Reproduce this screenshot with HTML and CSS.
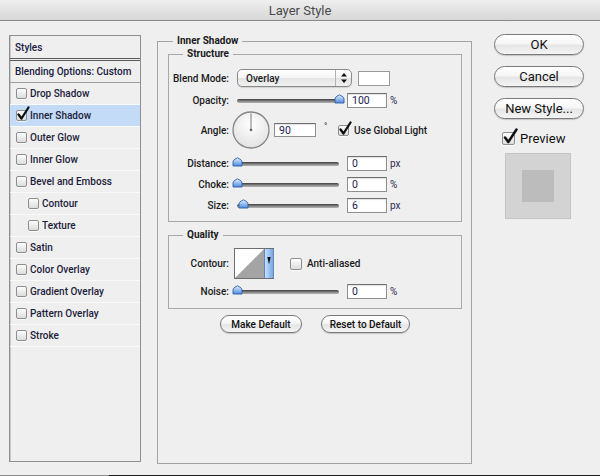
FILE: index.html
```html
<!DOCTYPE html>
<html>
<head>
<meta charset="utf-8">
<title>Layer Style</title>
<link rel="stylesheet" href="styles.css">
</head>
<body>
<div class="window">
  <div class="titlebar">Layer Style</div>
  <div class="content">
    <div class="styles-panel">
      <div class="sp-header">Styles</div>
      <div class="sp-blend">Blending Options: Custom</div>
      <div class="sp-row"><span class="cb"></span>Drop Shadow</div>
      <div class="sp-row selected"><span class="cb"><svg class="tick" width="14" height="15" viewBox="0 0 14 15"><path d="M2.5 8.5 L5.5 12.5 L12.5 1.5" fill="none" stroke="#111" stroke-width="2.3" stroke-linecap="round" stroke-linejoin="round"/></svg></span>Inner Shadow</div>
      <div class="sp-row"><span class="cb"></span>Outer Glow</div>
      <div class="sp-row"><span class="cb"></span>Inner Glow</div>
      <div class="sp-row"><span class="cb"></span>Bevel and Emboss</div>
      <div class="sp-row indent"><span class="cb"></span>Contour</div>
      <div class="sp-row indent"><span class="cb"></span>Texture</div>
      <div class="sp-row"><span class="cb"></span>Satin</div>
      <div class="sp-row"><span class="cb"></span>Color Overlay</div>
      <div class="sp-row"><span class="cb"></span>Gradient Overlay</div>
      <div class="sp-row"><span class="cb"></span>Pattern Overlay</div>
      <div class="sp-row"><span class="cb"></span>Stroke</div>
    </div>

    <div class="main-panel">
      <div class="group-title main-title">Inner Shadow</div>

      <div class="group structure">
        <div class="group-title">Structure</div>

        <div class="frow">
          <span class="lbl">Blend Mode:</span>
          <div class="select">
            <span class="select-text">Overlay</span>
            <span class="select-arrows"><svg width="8" height="12" viewBox="0 0 8 12"><path d="M4 1 L7 4.5 H1 Z" fill="#111"/><path d="M4 11 L7 7.5 H1 Z" fill="#111"/></svg></span>
          </div>
          <div class="swatch"></div>
        </div>

        <div class="frow gap4">
          <span class="lbl">Opacity:</span>
          <div class="slider"><div class="track"></div><svg class="thumb" style="left:99px" width="11" height="10" viewBox="0 0 11 10"><defs><linearGradient id="tg1" x1="0" y1="0" x2="0" y2="1"><stop offset="0" stop-color="#e6f0ff"/><stop offset="1" stop-color="#4b8be0"/></linearGradient></defs><path d="M1 9 V5 Q1 3.2 3 2.2 L5.5 0.8 L8 2.2 Q10 3.2 10 5 V9 Z" fill="url(#tg1)" stroke="#2f5fa6" stroke-width="0.9" stroke-linejoin="round"/></svg></div>
          <div class="num">100</div>
          <span class="unit">%</span>
        </div>

        <div class="frow angle-row">
          <span class="lbl">Angle:</span>
          <svg class="dial" width="38" height="38" viewBox="0 0 38 38"><defs><radialGradient id="dg" cx="0.5" cy="0.35" r="0.65"><stop offset="0" stop-color="#ffffff"/><stop offset="1" stop-color="#e2e2e2"/></radialGradient></defs><circle cx="19" cy="19" r="18" fill="url(#dg)" stroke="#858585" stroke-width="1.3"/><line x1="19" y1="19" x2="19" y2="2.5" stroke="#7a7a7a" stroke-width="1"/><circle cx="19" cy="19" r="1.3" fill="#666"/></svg>
          <div class="num angle-num">90</div>
          <span class="deg">°</span>
          <span class="cb"><svg class="tick" width="14" height="15" viewBox="0 0 14 15"><path d="M2.5 8.5 L5.5 12.5 L12.5 1.5" fill="none" stroke="#111" stroke-width="2.3" stroke-linecap="round" stroke-linejoin="round"/></svg></span>
          <span class="cb-label">Use Global Light</span>
        </div>

        <div class="frow gap5">
          <span class="lbl">Distance:</span>
          <div class="slider"><div class="track"></div><svg class="thumb" style="left:-3px" width="11" height="10" viewBox="0 0 11 10"><defs><linearGradient id="tg2" x1="0" y1="0" x2="0" y2="1"><stop offset="0" stop-color="#e6f0ff"/><stop offset="1" stop-color="#4b8be0"/></linearGradient></defs><path d="M1 9 V5 Q1 3.2 3 2.2 L5.5 0.8 L8 2.2 Q10 3.2 10 5 V9 Z" fill="url(#tg2)" stroke="#2f5fa6" stroke-width="0.9" stroke-linejoin="round"/></svg></div>
          <div class="num">0</div>
          <span class="unit">px</span>
        </div>

        <div class="frow gap3">
          <span class="lbl">Choke:</span>
          <div class="slider"><div class="track"></div><svg class="thumb" style="left:-3px" width="11" height="10" viewBox="0 0 11 10"><defs><linearGradient id="tg3" x1="0" y1="0" x2="0" y2="1"><stop offset="0" stop-color="#e6f0ff"/><stop offset="1" stop-color="#4b8be0"/></linearGradient></defs><path d="M1 9 V5 Q1 3.2 3 2.2 L5.5 0.8 L8 2.2 Q10 3.2 10 5 V9 Z" fill="url(#tg3)" stroke="#2f5fa6" stroke-width="0.9" stroke-linejoin="round"/></svg></div>
          <div class="num">0</div>
          <span class="unit">%</span>
        </div>

        <div class="frow gap3">
          <span class="lbl">Size:</span>
          <div class="slider"><div class="track"></div><svg class="thumb" style="left:3px" width="11" height="10" viewBox="0 0 11 10"><defs><linearGradient id="tg4" x1="0" y1="0" x2="0" y2="1"><stop offset="0" stop-color="#e6f0ff"/><stop offset="1" stop-color="#4b8be0"/></linearGradient></defs><path d="M1 9 V5 Q1 3.2 3 2.2 L5.5 0.8 L8 2.2 Q10 3.2 10 5 V9 Z" fill="url(#tg4)" stroke="#2f5fa6" stroke-width="0.9" stroke-linejoin="round"/></svg></div>
          <div class="num">6</div>
          <span class="unit">px</span>
        </div>
      </div>

      <div class="group quality">
        <div class="group-title">Quality</div>
        <div class="frow contour-row">
          <span class="lbl">Contour:</span>
          <svg class="contour" width="40" height="31" viewBox="0 0 40 31"><defs><linearGradient id="cg" x1="0" y1="0" x2="1" y2="0"><stop offset="0" stop-color="#d4e6fc"/><stop offset="1" stop-color="#6ea4e8"/></linearGradient></defs><rect x="0.5" y="0.5" width="39" height="30" fill="#ffffff" stroke="#6e6e6e"/><polygon points="1,30 30,1 30,30" fill="#a4a4a4"/><rect x="30" y="1" width="9.5" height="29" fill="url(#cg)"/><line x1="30.5" y1="1" x2="30.5" y2="30" stroke="#5c86c2"/><path d="M33.3 9 H36.7 L35 16.5 Z" fill="#111"/></svg>
          <span class="cb aa"></span>
          <span class="cb-label">Anti-aliased</span>
        </div>
        <div class="frow gap3">
          <span class="lbl">Noise:</span>
          <div class="slider"><div class="track"></div><svg class="thumb" style="left:-3px" width="11" height="10" viewBox="0 0 11 10"><defs><linearGradient id="tg5" x1="0" y1="0" x2="0" y2="1"><stop offset="0" stop-color="#e6f0ff"/><stop offset="1" stop-color="#4b8be0"/></linearGradient></defs><path d="M1 9 V5 Q1 3.2 3 2.2 L5.5 0.8 L8 2.2 Q10 3.2 10 5 V9 Z" fill="url(#tg5)" stroke="#2f5fa6" stroke-width="0.9" stroke-linejoin="round"/></svg></div>
          <div class="num">0</div>
          <span class="unit">%</span>
        </div>
      </div>

      <div class="btn-row">
        <button class="pill small make">Make Default</button>
        <button class="pill small reset">Reset to Default</button>
      </div>
    </div>

    <div class="actions">
      <button class="pill big">OK</button>
      <button class="pill big">Cancel</button>
      <button class="pill big">New Style...</button>
      <div class="preview-check">
        <span class="cb big-cb"><svg class="tick big-tick" width="16" height="17" viewBox="0 0 16 17"><path d="M3 9.5 L6.3 14 L14.5 1.5" fill="none" stroke="#111" stroke-width="2.5" stroke-linecap="round" stroke-linejoin="round"/></svg></span>
        <span class="preview-label">Preview</span>
      </div>
      <div class="preview-box"><div class="preview-inner"></div></div>
    </div>
  </div>
  <div class="bottom-edge"><span class="be-left"></span><span class="be-right"></span></div>
</div>
</body>
</html>
```

FILE: styles.css
```css
* { box-sizing: border-box; }

html, body {
  margin: 0;
  padding: 0;
  background: #efefef;
}

body {
  font-family: Roboto, "Liberation Sans", sans-serif;
  font-size: 10px;
  color: #1b1b1b;
}

.window {
  width: 600px;
  height: 476px;
  display: flex;
  flex-direction: column;
  overflow: hidden;
}

.titlebar {
  height: 21px;
  line-height: 21px;
  text-align: center;
  font-size: 13px;
  color: #4a4a4a;
  background: linear-gradient(#efefef, #d6d6d6);
  border-bottom: 1px solid #8a8a8a;
  flex: none;
}

.content {
  flex: 1;
  display: flex;
  align-items: flex-start;
  padding: 13px 0 0 9px;
}

/* ---------- Styles list ---------- */
.styles-panel {
  width: 132px;
  height: 427px;
  margin-top: 1px;
  border: 1px solid #8f8f8f;
  box-shadow: inset 1px 0 0 #c9c9c9;
  background: #efefef;
  font-weight: 500;
  flex: none;
}

.sp-header {
  height: 25px;
  padding: 6px 0 0 5px;
  border-bottom: 3px double #5a5a5a;
  color: #202040;
}

.sp-blend {
  height: 22px;
  line-height: 21px;
  padding-left: 5px;
  border-bottom: 1px solid #9c9c9c;
  color: #202040;
}

.sp-row {
  height: 22px;
  display: flex;
  align-items: center;
  padding-left: 6px;
  border-bottom: 1px solid #fafafa;
  color: #1d1d3c;
}

.sp-row.selected {
  background: #c4dbf8;
}

.sp-row.indent {
  padding-left: 18px;
}

.sp-row .cb {
  margin-right: 3px;
}

/* ---------- checkbox ---------- */
.cb {
  display: inline-block;
  position: relative;
  width: 11px;
  height: 11px;
  border: 1px solid #8e8e8e;
  border-radius: 2px;
  background: linear-gradient(#fdfdfd, #dcdcdc);
  box-shadow: 0 1px 0 rgba(255,255,255,0.7);
  flex: none;
}

.tick {
  position: absolute;
  left: -1px;
  top: -5px;
}

/* ---------- main panel ---------- */
.main-panel {
  position: relative;
  width: 315px;
  height: 423px;
  margin: 7px 0 0 16px;
  border: 1px solid #a3a3a3;
  padding: 12px 9px 0 10px;
  flex: none;
}

.group-title {
  position: absolute;
  top: -7px;
  left: 14px;
  padding: 0 4px;
  line-height: 12px;
  background: #efefef;
  font-weight: 700;
  color: #1b1b1b;
}

.main-title {
  left: 15px;
}

.group {
  position: relative;
  border: 1px solid #a8a8a8;
}

.structure {
  height: 168px;
  padding: 14px 0 7px 0;
}

.quality {
  height: 74px;
  margin-top: 13px;
  padding: 12px 0 0 0;
}

.frow {
  display: flex;
  align-items: center;
  height: 18px;
}

.gap4 { margin-top: 4px; }
.gap5 { margin-top: 5px; }
.gap3 { margin-top: 3px; }

.lbl {
  width: 60px;
  text-align: right;
  margin-right: 6px;
  font-weight: 500;
  flex: none;
}

.select {
  width: 115px;
  height: 18px;
  margin-left: 2px;
  border: 1px solid #8a8a8a;
  border-radius: 5px;
  background: linear-gradient(#ffffff, #f4f4f4 50%, #e4e4e4 51%, #f1f1f1);
  display: flex;
  align-items: center;
  justify-content: space-between;
  box-shadow: 0 1px 1px rgba(0,0,0,0.12);
  flex: none;
}

.select-text {
  padding-left: 8px;
  font-weight: 500;
}

.select-arrows {
  width: 16px;
  height: 16px;
  border-left: 1px solid #b3b3b3;
  display: flex;
  align-items: center;
  justify-content: center;
}

.swatch {
  width: 32px;
  height: 15px;
  margin-left: 6px;
  border: 1px solid #9a9a9a;
  background: #ffffff;
  flex: none;
}

.slider {
  position: relative;
  width: 106px;
  height: 18px;
  flex: none;
}

.track {
  position: absolute;
  left: 2px;
  right: 2px;
  top: 8px;
  height: 4px;
  border-radius: 2px;
  background: linear-gradient(#3f3f3f, #8c8c8c 60%, #b5b5b5);
}

.thumb {
  position: absolute;
  top: 3px;
}

.num {
  width: 40px;
  height: 15px;
  margin-left: 6px;
  padding: 0 0 0 4px;
  border: 1px solid #8f8f8f;
  border-top-color: #6f6f6f;
  background: #ffffff;
  box-shadow: inset 0 1px 1px rgba(0,0,0,0.12);
  line-height: 13px;
  font-size: 10.5px;
  color: #1a1a50;
  flex: none;
}

.unit {
  margin-left: 3px;
  color: #2a2a50;
}

.angle-row {
  height: 38px;
  margin-top: 2px;
}

.dial {
  margin-left: -3px;
  flex: none;
}

.angle-num {
  width: 42px;
  height: 14px;
  margin-left: 4px;
}

.deg {
  width: 22px;
  padding-left: 8px;
  align-self: flex-start;
  margin-top: 10px;
  font-size: 9px;
  flex: none;
}

.cb-label {
  margin-left: 5px;
  font-weight: 500;
}

.contour-row {
  height: 31px;
}

.contour {
  margin-left: -1px;
  flex: none;
}

.cb.aa {
  margin-left: 16px;
  width: 12px;
  height: 12px;
}

.btn-row {
  display: flex;
  justify-content: center;
  gap: 19px;
  margin-top: 6px;
}

.pill {
  font-family: Roboto, "Liberation Sans", sans-serif;
  color: #111;
  border: 1px solid #7a7a7a;
  background: linear-gradient(#ffffff, #f6f6f6 45%, #e6e6e6 55%, #f4f4f4);
  box-shadow: 0 1px 1px rgba(0,0,0,0.18);
  padding: 0;
  margin: 0;
}

.pill.small {
  height: 18px;
  border-radius: 9px;
  font-size: 10px;
  font-weight: 500;
}

.make { width: 82px; }
.reset { width: 89px; }

/* ---------- right column ---------- */
.actions {
  width: 90px;
  margin-left: 22px;
  display: flex;
  flex-direction: column;
  flex: none;
}

.pill.big {
  width: 90px;
  height: 21px;
  border-radius: 11px;
  font-size: 13px;
  line-height: 19px;
  margin-bottom: 11px;
}

.preview-check {
  display: flex;
  align-items: center;
  margin: 1px 0 0 8px;
  height: 14px;
}

.cb.big-cb {
  width: 13px;
  height: 13px;
}

.big-tick {
  left: -1px;
  top: -5px;
}

.preview-label {
  margin-left: 5px;
  font-size: 13px;
  color: #111;
}

.preview-box {
  width: 66px;
  height: 66px;
  margin: 8px 0 0 11px;
  border: 1px solid #c4c4c4;
  background: #d3d3d3;
  display: flex;
  align-items: center;
  justify-content: center;
}

.preview-inner {
  width: 32px;
  height: 32px;
  background: #bcbcbc;
}

/* ---------- bottom edge ---------- */
.bottom-edge {
  height: 1px;
  display: flex;
  flex: none;
}

.be-left {
  width: 109px;
  background: #8a8a8a;
}

.be-right {
  flex: 1;
  background: #1c1c1c;
}
```
